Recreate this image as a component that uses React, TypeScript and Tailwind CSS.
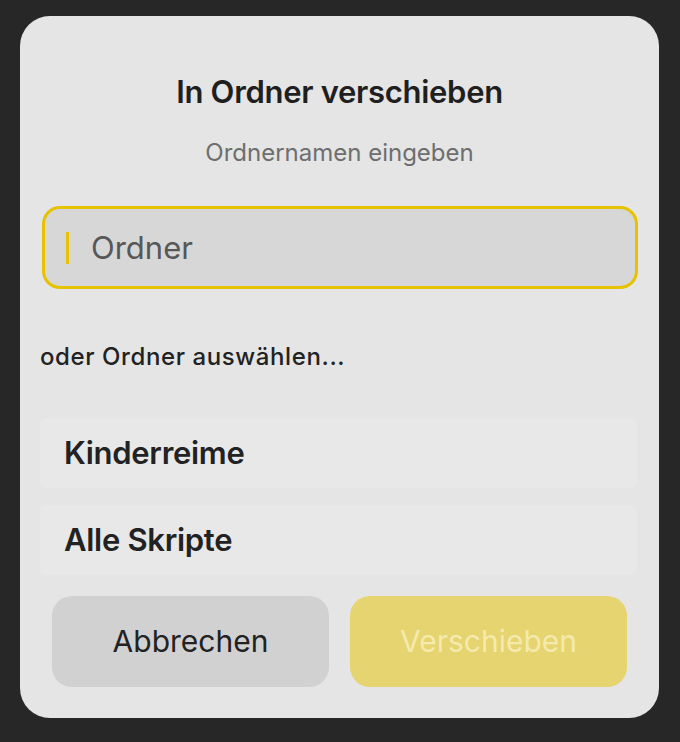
export default function App() {
  return (
    <div className="min-h-[742px] w-[680px] bg-[#272727] pt-4 pl-5" style={{ fontFamily: 'Inter, "Liberation Sans", sans-serif' }}>
      <div className="flex h-[702px] w-[639px] flex-col rounded-[30px] bg-[#e5e5e5] px-5">
        <h1 className="mt-[58px] text-center text-[31px] font-semibold leading-[36px] tracking-[-0.3px] text-[#1f1f1f]">
          In Ordner verschieben
        </h1>
        <p className="mt-[29px] text-center text-[24px] leading-[28px] text-[#6e6e6e]">Ordnernamen eingeben</p>

        <div className="mt-[39px] ml-[2px] flex h-[83px] w-[596px] items-center rounded-[18px] border-[3px] border-[#e6c200] bg-[#d7d7d7] pl-[21px]">
          <span className="h-[32px] w-[3px] bg-[#e6c200]" />
          <span className="ml-[22px] text-[31px] leading-[36px] text-[#575757]">Ordner</span>
        </div>

        <p className="mt-[54px] text-[24px] font-medium leading-[28px] tracking-[0.6px] text-[#222]">oder Ordner auswählen...</p>

        <div className="mt-[47px] flex flex-col gap-[17px]">
          {['Kinderreime', 'Alle Skripte'].map((name) => (
            <div key={name} className="flex h-[70px] w-[597px] items-center rounded-[6px] bg-[#e8e8e8] pl-6">
              <span className="text-[31px] font-semibold tracking-[-0.3px] text-[#222]">{name}</span>
            </div>
          ))}
        </div>

        <div className="mt-[21px] flex gap-[21px] px-3">
          <button className="h-[91px] w-[277px] rounded-[20px] bg-[#d1d1d1] text-[30px] text-[#222]">Abbrechen</button>
          <button className="h-[91px] w-[277px] rounded-[20px] bg-[#e6d470] text-[30px] text-[#f4eaae]">Verschieben</button>
        </div>
      </div>
    </div>
  )
}
